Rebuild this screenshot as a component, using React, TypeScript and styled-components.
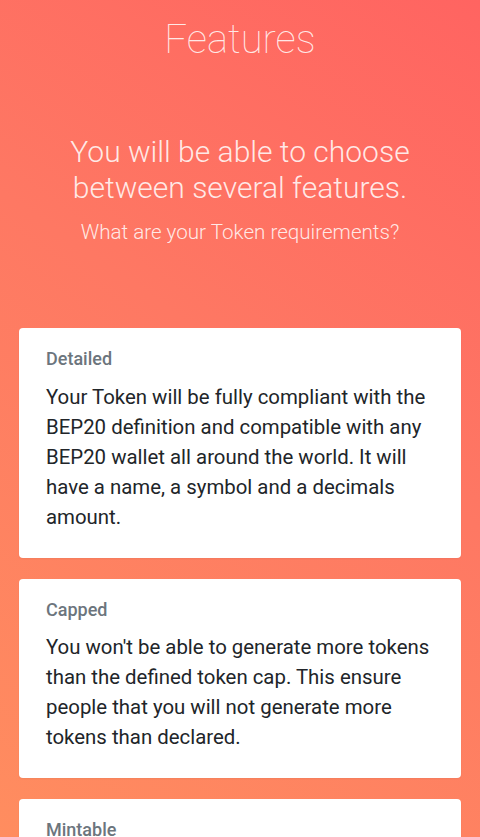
import React from 'react'
import styled, { createGlobalStyle } from 'styled-components'

const GlobalStyle = createGlobalStyle`
  html, body {
    margin: 0;
    padding: 0;
  }
  body {
    font-family: Roboto, 'Liberation Sans', sans-serif;
    -webkit-font-smoothing: antialiased;
  }
  * {
    box-sizing: border-box;
  }
`

type Feature = {
  title: string
  text: string
}

const features: Feature[] = [
  {
    title: 'Detailed',
    text: 'Your Token will be fully compliant with the BEP20 definition and compatible with any BEP20 wallet all around the world. It will have a name, a symbol and a decimals amount.',
  },
  {
    title: 'Capped',
    text: "You won't be able to generate more tokens than the defined token cap. This ensure people that you will not generate more tokens than declared.",
  },
  {
    title: 'Mintable',
    text: 'You will be able to generate tokens by minting them. Only token owner can mint new tokens until the cap is reached.',
  },
]

const Page = styled.div`
  height: 100vh;
  background: linear-gradient(35deg, #ff8d5f 0%, #fe7863 55%, #ff6461 100%);
  padding: 16px 19px 0;
  overflow: hidden;
`

const Header = styled.header`
  display: flex;
  flex-direction: column;
  align-items: center;
  text-align: center;
  color: rgba(255, 255, 255, 0.85);
`

const Title = styled.h1`
  margin: 0;
  font-size: 40px;
  line-height: 48px;
  font-weight: 100;
`

const Lead = styled.h2`
  margin: 70px 0 0;
  font-size: 30px;
  line-height: 36px;
  font-weight: 300;
`

const Question = styled.p`
  margin: 11px 0 0;
  font-size: 20.6px;
  line-height: 30px;
  font-weight: 300;
`

const CardList = styled.div`
  display: flex;
  flex-direction: column;
  gap: 21px;
  margin-top: 81px;
`

const Card = styled.section`
  background: #fff;
  border-radius: 4px;
  padding: 20px 27px 26px;
  box-shadow: 0 1px 2px rgba(0, 0, 0, 0.05);
`

const CardTitle = styled.h3`
  margin: 0 0 12px;
  font-size: 18px;
  line-height: 21.6px;
  font-weight: 500;
  color: #6c757d;
`

const CardText = styled.p`
  margin: 0;
  font-size: 20.4px;
  line-height: 30px;
  font-weight: 400;
  color: #212529;
`

export default function App() {
  return (
    <>
      <GlobalStyle />
      <Page>
        <Header>
          <Title>Features</Title>
          <Lead>
            You will be able to choose
            <br />
            between several features.
          </Lead>
          <Question>What are your Token requirements?</Question>
        </Header>
        <CardList>
          {features.map((f) => (
            <Card key={f.title}>
              <CardTitle>{f.title}</CardTitle>
              <CardText>{f.text}</CardText>
            </Card>
          ))}
        </CardList>
      </Page>
    </>
  )
}
